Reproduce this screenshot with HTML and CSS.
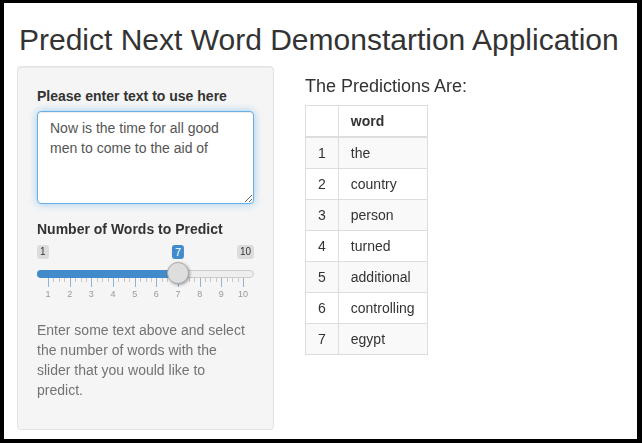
FILE: index.html
```html
<!DOCTYPE html>
<html lang="en">
<head>
<meta charset="utf-8">
<title>Predict Next Word</title>
<link rel="stylesheet" href="styles.css">
</head>
<body>
<div class="frame">
  <h2 class="title">Predict Next Word Demonstartion Application</h2>
  <div class="layout">
    <aside class="well">
      <div class="form-group">
        <label class="control-label" for="txt">Please enter text to use here</label>
        <textarea id="txt" class="form-control">Now is the time for all good men to come to the aid of </textarea>
      </div>
      <div class="form-group">
        <label class="control-label">Number of Words to Predict</label>
        <div class="irs">
          <span class="irs-min">1</span>
          <span class="irs-max">10</span>
          <span class="irs-single" style="left: 141px">7</span>
          <span class="irs-line"></span>
          <span class="irs-bar" style="width: 142px"></span>
          <div class="irs-grid">
            <span class="pol" style="left:0%"></span>
            <span class="pol small" style="left:2.778%"></span>
            <span class="pol small" style="left:5.556%"></span>
            <span class="pol small" style="left:8.333%"></span>
            <span class="pol" style="left:11.111%"></span>
            <span class="pol small" style="left:13.889%"></span>
            <span class="pol small" style="left:16.667%"></span>
            <span class="pol small" style="left:19.444%"></span>
            <span class="pol" style="left:22.222%"></span>
            <span class="pol small" style="left:25%"></span>
            <span class="pol small" style="left:27.778%"></span>
            <span class="pol small" style="left:30.556%"></span>
            <span class="pol" style="left:33.333%"></span>
            <span class="pol small" style="left:36.111%"></span>
            <span class="pol small" style="left:38.889%"></span>
            <span class="pol small" style="left:41.667%"></span>
            <span class="pol" style="left:44.444%"></span>
            <span class="pol small" style="left:47.222%"></span>
            <span class="pol small" style="left:50%"></span>
            <span class="pol small" style="left:52.778%"></span>
            <span class="pol" style="left:55.556%"></span>
            <span class="pol small" style="left:58.333%"></span>
            <span class="pol small" style="left:61.111%"></span>
            <span class="pol small" style="left:63.889%"></span>
            <span class="pol" style="left:66.667%"></span>
            <span class="pol small" style="left:69.444%"></span>
            <span class="pol small" style="left:72.222%"></span>
            <span class="pol small" style="left:75%"></span>
            <span class="pol" style="left:77.778%"></span>
            <span class="pol small" style="left:80.556%"></span>
            <span class="pol small" style="left:83.333%"></span>
            <span class="pol small" style="left:86.111%"></span>
            <span class="pol" style="left:88.889%"></span>
            <span class="pol small" style="left:91.667%"></span>
            <span class="pol small" style="left:94.444%"></span>
            <span class="pol small" style="left:97.222%"></span>
            <span class="pol" style="left:100%"></span>
            <span class="gtext" style="left:0%">1</span>
            <span class="gtext" style="left:11.111%">2</span>
            <span class="gtext" style="left:22.222%">3</span>
            <span class="gtext" style="left:33.333%">4</span>
            <span class="gtext" style="left:44.444%">5</span>
            <span class="gtext" style="left:55.556%">6</span>
            <span class="gtext" style="left:66.667%">7</span>
            <span class="gtext" style="left:77.778%">8</span>
            <span class="gtext" style="left:88.889%">9</span>
            <span class="gtext" style="left:100%">10</span>
          </div>
          <span class="irs-handle" style="left: 130px"></span>
        </div>
      </div>
      <p class="help">Enter some text above and select the number of words with the slider that you would like to predict.</p>
    </aside>
    <main class="results">
      <h4 class="subtitle">The Predictions Are:</h4>
      <table class="table">
        <thead>
          <tr><th></th><th>word</th></tr>
        </thead>
        <tbody>
          <tr><td class="idx">1</td><td>the</td></tr>
          <tr><td class="idx">2</td><td>country</td></tr>
          <tr><td class="idx">3</td><td>person</td></tr>
          <tr><td class="idx">4</td><td>turned</td></tr>
          <tr><td class="idx">5</td><td>additional</td></tr>
          <tr><td class="idx">6</td><td>controlling</td></tr>
          <tr><td class="idx">7</td><td>egypt</td></tr>
        </tbody>
      </table>
    </main>
  </div>
</div>
<script src="script.js"></script>
</body>
</html>
```

FILE: styles.css
```css
* { box-sizing: border-box; }

html, body {
  margin: 0;
  padding: 0;
  background: #000;
}

body {
  font-family: "Liberation Sans", Arial, Helvetica, sans-serif;
  font-size: 14px;
  line-height: 20px;
  color: #333;
}

.frame {
  width: 642px;
  height: 443px;
  background: #fff;
  border-style: solid;
  border-color: #000;
  border-width: 3px 5px 4px 4px;
  overflow: hidden;
}

.title {
  margin: 20px 0 10px 15px;
  font-size: 30px;
  font-weight: 400;
  line-height: 33px;
  color: #333;
  white-space: nowrap;
}

.layout {
  display: flex;
  align-items: flex-start;
  padding-left: 13px;
}

.well {
  width: 257px;
  flex: none;
  background: #f5f5f5;
  border: 1px solid #e3e3e3;
  border-radius: 4px;
  box-shadow: inset 0 1px 1px rgba(0, 0, 0, 0.05);
  padding: 19px;
}

.form-group {
  margin-bottom: 15px;
}

.control-label {
  display: block;
  font-weight: 700;
  margin-bottom: 5px;
  color: #333;
}

.form-control {
  display: block;
  width: 100%;
  height: 93px;
  margin: 0;
  padding: 6px 12px;
  font-family: inherit;
  font-size: 14px;
  line-height: 20px;
  color: #555;
  background: #fff;
  border: 1px solid #66afe9;
  border-radius: 4px;
  box-shadow: inset 0 1px 1px rgba(0, 0, 0, 0.075), 0 0 8px rgba(102, 175, 233, 0.6);
  outline: none;
  resize: vertical;
  caret-color: #333;
}

/* slider */
.irs {
  position: relative;
  height: 61px;
}

.irs-min,
.irs-max,
.irs-single {
  position: absolute;
  top: 1px;
  padding: 1px 3px;
  font-size: 10px;
  line-height: 12px;
  border-radius: 3px;
}

.irs-min {
  left: 0;
  color: #333;
  background: rgba(0, 0, 0, 0.1);
}

.irs-max {
  right: 0;
  color: #333;
  background: rgba(0, 0, 0, 0.1);
}

.irs-single {
  transform: translateX(-50%);
  color: #fff;
  font-size: 11px;
  background: #428bca;
}

.irs-line {
  position: absolute;
  left: 0;
  right: 0;
  top: 26px;
  height: 8px;
  background: #eee;
  border: 1px solid #ccc;
  border-radius: 16px;
}

.irs-bar {
  position: absolute;
  left: 0;
  top: 26px;
  height: 8px;
  background: #428bca;
  border-radius: 16px 0 0 16px;
}

.irs-handle {
  position: absolute;
  top: 18px;
  width: 22px;
  height: 22px;
  border: 1px solid #aaa;
  background: #dedede;
  border-radius: 50%;
  box-shadow: 1px 1px 3px rgba(0, 0, 0, 0.35);
}

.irs-grid {
  position: absolute;
  left: 11px;
  width: 195px;
  top: 34px;
  height: 27px;
}

.pol {
  position: absolute;
  top: 0;
  width: 1px;
  height: 9px;
  background: #428bca;
  opacity: 0.6;
}

.pol.small {
  height: 4px;
  background: #999;
  opacity: 0.5;
}

.gtext {
  position: absolute;
  top: 11px;
  transform: translateX(-50%);
  font-size: 9px;
  line-height: 10px;
  color: #999;
  white-space: nowrap;
}

.help {
  margin: 0 0 10px;
  color: #737373;
}

/* results */
.results {
  margin-left: 31px;
}

.subtitle {
  margin: 10px 0 9px;
  font-size: 18px;
  font-weight: 400;
  line-height: 20px;
  color: #333;
}

.table {
  border-collapse: collapse;
  border: 1px solid #ddd;
  background: #fff;
}

.table th,
.table td {
  padding: 5px 12px;
  border: 1px solid #ddd;
  line-height: 20px;
  text-align: left;
  vertical-align: top;
}

.table th {
  font-weight: 700;
  border-bottom-width: 2px;
}

.table td.idx {
  text-align: center;
}

.table tbody tr:nth-child(odd) {
  background: #f9f9f9;
}
```

FILE: script.js
```js
var t = document.getElementById('txt');
if (t) {
  t.focus();
  var n = t.value.length;
  t.setSelectionRange(n, n);
}
```
